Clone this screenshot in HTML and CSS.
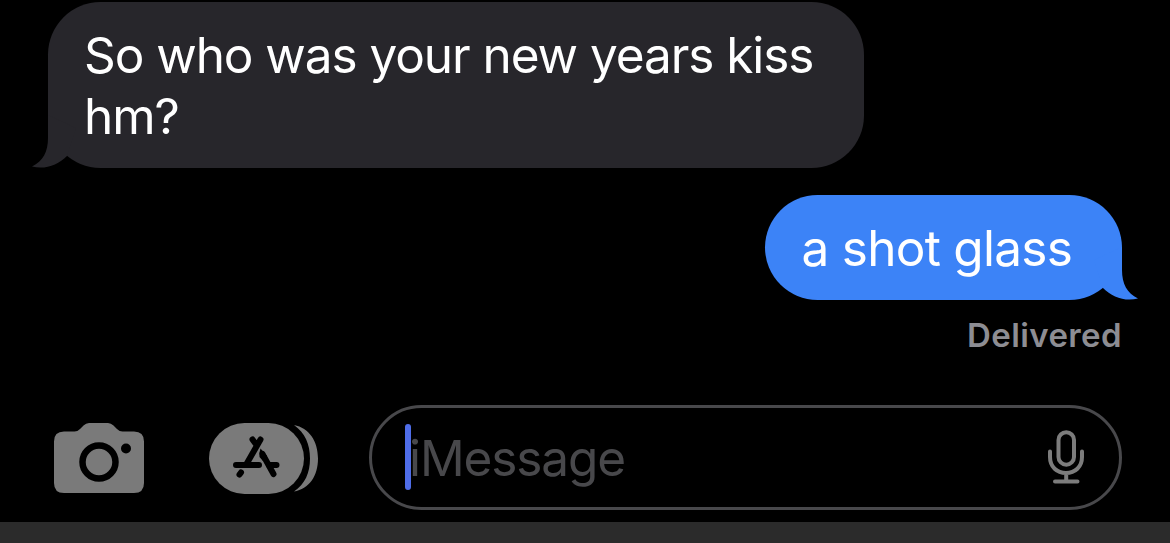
FILE: index.html
```html
<!DOCTYPE html>
<html lang="en">
<head>
<meta charset="utf-8">
<title>Messages</title>
<link rel="stylesheet" href="styles.css">
</head>
<body>
<main class="screen">
  <section class="thread">
    <div class="bubble received">
      <svg class="tail" width="80" height="60" viewBox="0 0 80 60"><path d="M16 7V30C16 44 11 53 0 58.500C13 62 26 57 35 48L44 20Z"/></svg>
      <p class="text"><span class="line">So who was your new years kiss</span> <span class="line">hm?</span></p>
    </div>
    <div class="bubble sent">
      <svg class="tail" width="80" height="60" viewBox="0 0 80 60"><path d="M64 7V30C64 44 69 53 80 58.500C67 62 54 57 45 48L36 20Z"/></svg>
      <p class="text">a shot glass</p>
    </div>
    <div class="status">Delivered</div>
  </section>
  <footer class="composer">
    <svg class="camera" width="90" height="70" viewBox="0 0 90 70">
      <path fill="#7a7a7a" d="M10 8.500H20.500Q23.500 8.500 26 6L29.500 2.500Q32 0 35 0H54Q57 0 59.500 2.500L63 6Q65.500 8.500 68.500 8.500H80Q90 8.500 90 18.500V60Q90 70 80 70H10Q0 70 0 60V18.500Q0 8.500 10 8.500Z"/>
      <circle cx="45" cy="39" r="16.500" fill="none" stroke="#000" stroke-width="6.500"/>
      <circle cx="72" cy="25.500" r="5"/>
    </svg>
    <svg class="apps" width="110" height="72" viewBox="0 0 110 72">
      <path fill="#7a7a7a" d="M85 2C100 5 109 18 109 35.500S100 66 85 68.500C96 61 101 50 101 35.500S96 10 85 2Z"/>
      <rect x="0" y="0" width="95" height="71" rx="35.500" fill="#7a7a7a"/>
      <g fill="none" stroke="#000" stroke-width="6" stroke-linecap="round" stroke-linejoin="round">
        <path d="M51.500 16.500L37.500 41M43.500 16.500L47.500 22M27 42H50M60 42H67.500M30.500 51.500L32 49.500"/>
        <path d="M53.500 31L64.500 51"/>
      </g>
      <path d="M51.500 25.500L58 33L54 38L50.500 34Q50 29 51.500 25.500Z"/>
    </svg>
    <div class="field">
      <span class="caret"></span>
      <span class="placeholder">iMessage</span>
      <svg class="mic" width="36" height="54" viewBox="0 0 36 54" fill="none" stroke="#7c7c7c" stroke-width="4" stroke-linecap="round">
        <rect x="10.500" y="2.200" width="15.500" height="32.500" rx="7.750"/>
        <path d="M2 21.500V27C2 37 9 43 18 43S34 37 34 27V21.500M18.200 43V51.500M7 51.500H29.500"/>
      </svg>
    </div>
  </footer>
  <div class="keyboard"></div>
</main>
</body>
</html>
```
FILE: styles.css
```css
body {
  margin: 0;
  background: #000;
  font-family: Inter, "Liberation Sans", sans-serif;
}

.screen {
  display: flex;
  flex-direction: column;
  height: 543px;
  overflow: hidden;
}

.thread {
  display: flex;
  flex-direction: column;
  height: 403px;
  box-sizing: border-box;
  padding: 2px 48px 0;
}

.bubble {
  position: relative;
  box-sizing: border-box;
  border-radius: 52.5px;
  color: #fff;
  font-size: 49.5px;
  line-height: 61px;
}

.received {
  align-self: flex-start;
  width: 816px;
  height: 166px;
  padding: 23px 36px;
  background: #27262b;
  letter-spacing: -1.06px;
}

.sent {
  align-self: flex-end;
  width: 357px;
  height: 105px;
  margin-top: 27px;
  padding: 23px 36.5px;
  background: #3c83f7;
  letter-spacing: -0.72px;
}

.text {
  position: relative;
  margin: 0;
  white-space: nowrap;
}

.line {
  display: block;
}

.tail {
  position: absolute;
  bottom: 0;
}

.received .tail {
  left: -16px;
  fill: #27262b;
}

.sent .tail {
  right: -16px;
  fill: #3c83f7;
}

.status {
  align-self: flex-end;
  margin-top: 14px;
  color: #8d8d93;
  font-size: 33px;
  font-weight: 600;
  letter-spacing: 0.4px;
  line-height: 42px;
}

.composer {
  display: flex;
  align-items: flex-start;
  height: 117px;
  padding: 2px 48px 0 54px;
  box-sizing: border-box;
}

.camera {
  margin-top: 18px;
}

.apps {
  margin: 18px 0 0 65px;
}

.field {
  display: flex;
  align-items: center;
  box-sizing: border-box;
  width: 753px;
  height: 105px;
  margin-left: 50px;
  padding: 0 35px 1px 33px;
  border: 3px solid #48484b;
  border-radius: 53px;
}

.caret {
  width: 6px;
  height: 66px;
  border-radius: 3px;
  background: #4f6de8;
}

.placeholder {
  margin-left: -2px;
  padding-top: 3px;
  color: #48484b;
  font-size: 49.5px;
  letter-spacing: -1.1px;
  line-height: 61px;
}

.mic {
  margin-left: auto;
}

.keyboard {
  flex: 1;
  margin-top: 2px;
  background: #2b2b2b;
}
```
